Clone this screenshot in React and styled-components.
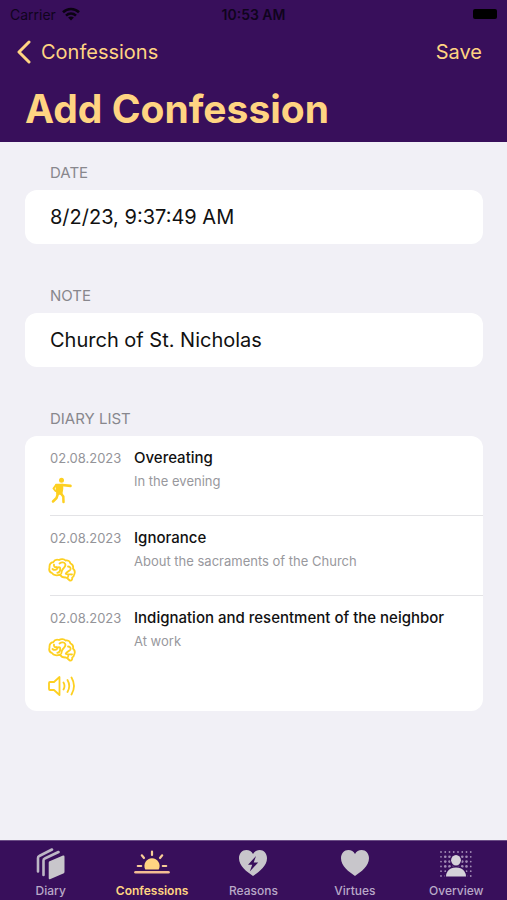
import React, { useState } from 'react';
import styled, { createGlobalStyle } from 'styled-components';

const purple = '#380f5b';
const gold = '#ffd482';
const yellow = '#fdd021';

const entries = [
  { date: '02.08.2023', title: 'Overeating', note: 'In the evening', kinds: ['deed'] },
  { date: '02.08.2023', title: 'Ignorance', note: 'About the sacraments of the Church', kinds: ['thought'] },
  { date: '02.08.2023', title: 'Indignation and resentment of the neighbor', note: 'At work', kinds: ['thought', 'word'] },
];

const GlobalStyle = createGlobalStyle`
  * {
    box-sizing: border-box;
  }

  body {
    margin: 0;
    background: #f1f0f6;
    font-family: Inter, "Liberation Sans", sans-serif;
  }
`

const WifiIcon = () => (
  <svg width="18" height="14" viewBox="0 0 18 14" fill="none" stroke="#0b0312" strokeWidth="2.6" aria-hidden="true">
    <path d="M1 5.2C5.6.9 12.4.9 17 5.2" />
    <path d="M4 8.6c3-2.7 7-2.7 10 0" />
    <path d="M9 13.6l-2.900-3c1.700-1.500 4.100-1.500 5.800 0z" fill="#0b0312" stroke="none" />
  </svg>
)

const BackIcon = () => (
  <svg width="14" height="24" viewBox="0 0 14 24" fill="none" stroke={gold} strokeWidth="3" strokeLinecap="round" strokeLinejoin="round" aria-hidden="true">
    <path d="M12 2L2 12l10 10" />
  </svg>
)

const BoxingIcon = () => (
  <svg width="28" height="28" viewBox="0 0 28 28" fill="none" stroke={yellow} strokeLinecap="round" strokeLinejoin="round" aria-hidden="true">
    <circle cx="13.5" cy="4.2" r="2.5" fill={yellow} stroke="none" />
    <path d="M8 8.500h6.500v4.500l-.8 5H9z" fill={yellow} strokeWidth="1.500" />
    <path d="M14 9l8.500.9" strokeWidth="2.600" />
    <path d="M8 9l-2.500 3.500 2 2.500" strokeWidth="2" />
    <path d="M10 17.500L8.500 22l-3.500 3.500M12.500 17l2.800 3.500.2 5.500" strokeWidth="2.500" />
  </svg>
)

const BrainIcon = () => (
  <svg width="28" height="26" viewBox="0 0 28 26" fill="none" stroke={yellow} strokeWidth="1.8" strokeLinecap="round" strokeLinejoin="round" aria-hidden="true">
    <path d="M4 16C1.500 15 .9 12.500 1.500 10.500 1.300 7.500 3 5.500 5.200 5.200 6.500 3 9 2.300 11 3c2-1.500 5-1.200 6.500.5 2.500-.5 4.500 1 5 3 2.200 1 3 3 2.500 5 1.800 1.700 2.200 4 1.200 6-.2 1.500-1 2.500-2 3 .3 1.700-.5 3-2 3.200-1.500-1-2.800-2.500-4.200-3.200-3 .2-5-1-6-3-3 1.500-6.500.8-8-1.500z" />
    <path d="M6 7.500c-.5 2 1 3.200 2.800 2.500M4.500 12c1.500 1.500 4 1.200 4.800-.5 1-2 3-1.500 3 .5s-1.300 3.500-3 3.800" />
    <path d="M11.500 6.500c2-1.800 5-1.500 5.800.5.700 2-.8 3.300-2 4.500-1.300 1.300-1.800 3-2 5M20 9.500c1.800 0 3 1.200 2.500 2.800-.8 2-4 2.200-4.800 4.400 2 1.300 4 .3 6.300.8M19.500 21c.8-1 1-2.500.5-3.500" />
  </svg>
)

const SpeakerIcon = () => (
  <svg width="28" height="24" viewBox="0 0 28 24" fill="none" stroke={yellow} strokeWidth="1.8" strokeLinecap="round" strokeLinejoin="round" aria-hidden="true">
    <path d="M1 9q0-1 1-1h4l5.500-5v18L6 16H2q-1 0-1-1z" />
    <path d="M15.500 8.500q2 3.500 0 7M19.500 6q3.500 6 0 12M23.500 3.500q5 8.500 0 17" />
  </svg>
)

const DiaryIcon = () => (
  <svg width="30" height="32" viewBox="0 0 30 32" aria-hidden="true">
    <path d="M13 13.500L27 7.500q1.500-.5 1.500 1.200v15q0 1.300-1.200 1.900L14.500 31q-1.800.8-1.800-1V15q0-1 .3-1.500z" fill="#c8c6cb" />
    <path d="M2 23.500V10q0-1.500 1.300-2L16 1.500M7.500 27V12.500q0-1.500 1.300-2L22.500 4" fill="none" stroke="#bdb7c5" strokeWidth="2.6" strokeLinecap="round" />
  </svg>
)

const SunriseIcon = () => (
  <svg width="36" height="30" viewBox="0 0 36 30" aria-hidden="true">
    <path d="M11.300 20.500A7.600 7.600 0 1124.700 20.500z" fill={gold} />
    <path d="M1.500 23.200h33" stroke="#f3bd93" strokeWidth="2.6" strokeLinecap="round" />
    <path d="M18 6V2.500M10 9L7.800 6.300M26 9l2.200-2.700M7.200 17H3.800M28.800 17h3.400" stroke="#f8cd98" strokeWidth="2.2" strokeLinecap="round" />
  </svg>
)

const heart = 'M14 27C8 23 0 17 0 9.300 0 4.500 3.300 1 7.300 1 10.300 1 12.700 2.500 14 5 15.300 2.500 17.700 1 20.700 1 24.700 1 28 4.500 28 9.300 28 17 20 23 14 27z'

const HeartIcon = ({ bolt }) => (
  <svg width="28" height="30" viewBox="0 0 28 30" aria-hidden="true">
    <path d={heart} fill="#c8c6cb" />
    {bolt && <path d="M17 7L9 15.800h4.200L10.800 22.500l8.400-9h-4.500z" fill={purple} />}
  </svg>
)

const dots = [0, 1, 2, 3, 4, 5, 6, 7];

const OverviewIcon = () => (
  <svg width="34" height="28" viewBox="0 0 34 28" aria-hidden="true">
    {dots.map(col => [0, 1, 2, 3, 4, 5].map(row => (
      <circle
        key={`${col}-${row}`}
        cx={2 + col * 4.25}
        cy={2 + row * 4.8}
        r={col > 0 && col < 7 && row > 0 && row < 4 ? 1.3 : 0.9}
        fill="#a18bb5"
      />
    )))}
    <path d="M17 4c3.500 0 5.800 2.700 5.800 6s-2.300 6.500-5.800 6.500-5.800-3.200-5.800-6.500S13.500 4 17 4zM5.500 28q.8-12 11.500-12t11.500 12z" fill={purple} />
    <ellipse cx="17" cy="10.200" rx="4.900" ry="5.300" fill="#d5d2d9" />
    <path d="M7 26.500q0-3 1.500-5Q11 17.500 17 17.500t8.500 4Q27 23.500 27 26.500z" fill="#d5d2d9" />
  </svg>
)

const kindIcons = {
  deed: <BoxingIcon />,
  thought: <BrainIcon />,
  word: <SpeakerIcon />,
}

const tabs = [
  { name: 'Diary', icon: <DiaryIcon /> },
  { name: 'Confessions', icon: <SunriseIcon /> },
  { name: 'Reasons', icon: <HeartIcon bolt /> },
  { name: 'Virtues', icon: <HeartIcon /> },
  { name: 'Overview', icon: <OverviewIcon /> },
];

const Field = ({ id, label, value }) => {
  const [text, setText] = useState(value);

  return (
    <Section>
      <Label htmlFor={id}>{label}</Label>
      <TextInput id={id} type="text" value={text} onChange={e => setText(e.target.value)} />
    </Section>
  )
}

const DiaryItem = (props) => {
  const { entry } = props;

  return (
    <Item>
      <ItemSide>
        <ItemDate>{entry.date}</ItemDate>
        {entry.kinds.map(kind => <Kind key={kind}>{kindIcons[kind]}</Kind>)}
      </ItemSide>
      <div>
        <ItemTitle>{entry.title}</ItemTitle>
        <ItemNote>{entry.note}</ItemNote>
      </div>
    </Item>
  )
}

const App = () => (
  <Screen>
    <GlobalStyle />
    <Header>
      <StatusBar>
        <Carrier>Carrier <WifiIcon /></Carrier>
        <Clock>10:53 AM</Clock>
        <BatterySlot><Battery /></BatterySlot>
      </StatusBar>
      <NavBar>
        <NavButton type="button"><BackIcon />Confessions</NavButton>
        <NavButton type="button">Save</NavButton>
      </NavBar>
      <Title>Add Confession</Title>
    </Header>
    <Content>
      <Field id="date" label="DATE" value="8/2/23, 9:37:49 AM" />
      <Field id="note" label="NOTE" value="Church of St. Nicholas" />
      <Section>
        <Label as="h2">DIARY LIST</Label>
        <List>
          {entries.map(entry => <DiaryItem key={entry.title} entry={entry} />)}
        </List>
      </Section>
    </Content>
    <TabBar>
      {tabs.map(tab => (
        <Tab key={tab.name} type="button" $active={tab.name === 'Confessions'}>
          <TabIcon>{tab.icon}</TabIcon>
          {tab.name}
        </Tab>
      ))}
    </TabBar>
  </Screen>
)

const Screen = styled.div`
  display: flex;
  flex-direction: column;
  min-height: 100vh;
`

const Header = styled.header`
  background: ${purple};
  color: ${gold};
`

const StatusBar = styled.div`
  display: grid;
  grid-template-columns: 1fr auto 1fr;
  align-items: center;
  height: 28px;
  padding: 0 10px;
  color: #10041d;
  font-size: 14px;
`

const Carrier = styled.span`
  display: flex;
  align-items: center;
  gap: 6px;
`

const Clock = styled.span`
  font-weight: 600;
`

const BatterySlot = styled.span`
  display: flex;
  justify-content: flex-end;
`

const Battery = styled.span`
  width: 24px;
  height: 10px;
  border-radius: 2px;
  background: #000;
`

const NavBar = styled.nav`
  display: flex;
  align-items: center;
  justify-content: space-between;
  height: 48px;
  padding: 0 25px 0 17px;
`

const NavButton = styled.button`
  display: flex;
  align-items: center;
  gap: 10px;
  padding: 0;
  border: 0;
  background: none;
  color: inherit;
  font-family: inherit;
  font-size: 20px;
`

const Title = styled.h1`
  margin: 0;
  padding: 0 25px;
  font-size: 39px;
  line-height: 66px;
  font-weight: 700;
`

const Content = styled.main`
  flex: 1;
  display: flex;
  flex-direction: column;
  gap: 40px;
  padding: 19px 24px 40px 25px;
`

const Section = styled.section`
  display: flex;
  flex-direction: column;
  gap: 6px;
`

const Label = styled.label`
  margin: 0;
  padding-left: 25px;
  color: #88878d;
  font-size: 15px;
  line-height: 23px;
  font-weight: 400;
`

const TextInput = styled.input`
  width: 100%;
  height: 54px;
  padding: 0 25px;
  border: 0;
  border-radius: 12px;
  background: #fff;
  color: #111;
  font-family: inherit;
  font-size: 20px;
`

const List = styled.ul`
  margin: 0;
  padding: 0 0 0 25px;
  border-radius: 12px;
  background: #fff;
  list-style: none;
`

const Item = styled.li`
  display: flex;
  gap: 8px;
  padding: 12px 12px 7px 0;

  & + & {
    border-top: 1px solid #e3e3e6;
  }
`

const ItemSide = styled.div`
  flex: none;
  width: 76px;
`

const ItemDate = styled.time`
  display: block;
  color: #949499;
  font-size: 13px;
  line-height: 20px;
`

const Kind = styled.div`
  display: flex;
  align-items: center;
  height: 36px;
  margin: 4px 0 0 -2px;

  & + & {
    margin-top: 0;
  }
`

const ItemTitle = styled.h3`
  margin: 0;
  color: #111;
  font-size: 15px;
  line-height: 20px;
  font-weight: 500;
`

const ItemNote = styled.p`
  margin: 4px 0 0;
  color: #98989d;
  font-size: 13px;
  line-height: 18px;
`

const TabBar = styled.nav`
  position: sticky;
  bottom: 0;
  display: grid;
  grid-template-columns: repeat(5, 1fr);
  height: 60px;
  border-top: 1px solid #6b4d86;
  background: ${purple};
`

const Tab = styled.button`
  display: flex;
  flex-direction: column;
  align-items: center;
  padding: 4px 0 0;
  border: 0;
  background: none;
  color: ${props => props.$active ? gold : '#b9a9c8'};
  font-family: inherit;
  font-size: 12px;
  line-height: 16px;
  font-weight: ${props => props.$active ? 600 : 500};
`

const TabIcon = styled.span`
  display: flex;
  align-items: center;
  height: 38px;
`

export default App;
